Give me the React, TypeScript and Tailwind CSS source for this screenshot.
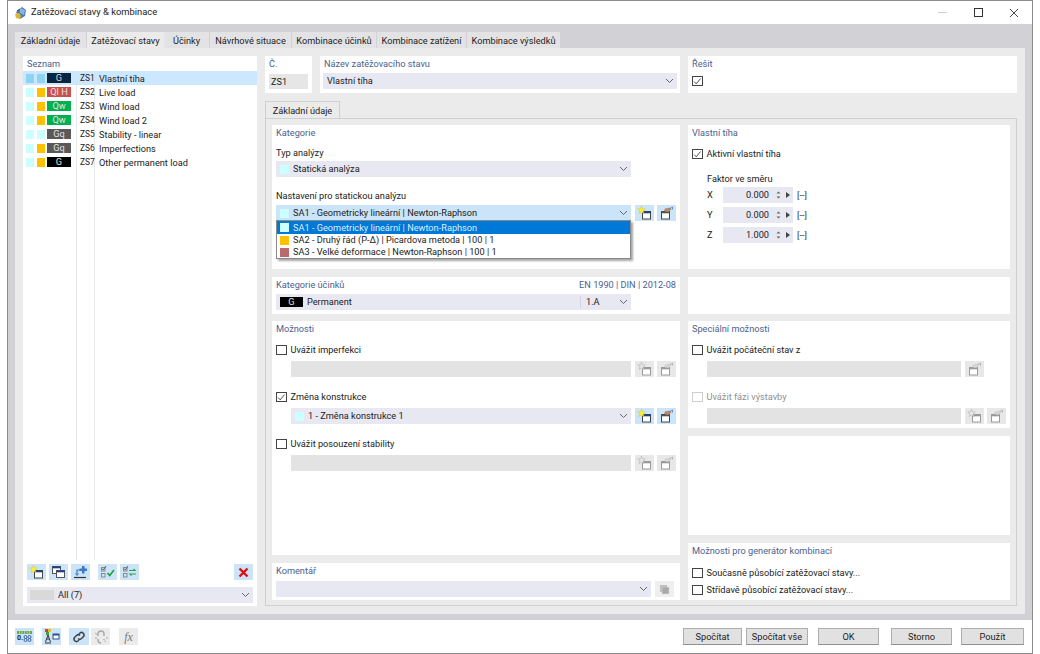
import { ReactNode } from "react";

const listRows = [
  { a: "bg-[#ccffff]", b: "bg-[#ffc000]", tag: "Ql H", tagColor: "bg-[#c85050]", code: "ZS2", name: "Live load" },
  { a: "bg-[#ccffff]", b: "bg-[#ffc000]", tag: "Qw", tagColor: "bg-[#00b050]", code: "ZS3", name: "Wind load" },
  { a: "bg-[#ccffff]", b: "bg-[#ffc000]", tag: "Qw", tagColor: "bg-[#00b050]", code: "ZS4", name: "Wind load 2" },
  { a: "bg-[#ccffff]", b: "bg-[#ccffff]", tag: "Gq", tagColor: "bg-[#595959]", code: "ZS5", name: "Stability - linear" },
  { a: "bg-[#ccffff]", b: "bg-[#ffc000]", tag: "Gq", tagColor: "bg-[#595959]", code: "ZS6", name: "Imperfections" },
  { a: "bg-[#ccffff]", b: "bg-[#ffc000]", tag: "G", tagColor: "bg-black", code: "ZS7", name: "Other permanent load" },
];

const tabs = [
  { label: "Základní údaje", w: "w-[72px]" },
  { label: "Zatěžovací stavy", w: "w-[77px]", active: true },
  { label: "Účinky", w: "w-[46px]" },
  { label: "Návrhové situace", w: "w-[82px]" },
  { label: "Kombinace účinků", w: "w-[85px]" },
  { label: "Kombinace zatížení", w: "w-[90px]" },
  { label: "Kombinace výsledků", w: "w-[94px]" },
];

function Chevron() {
  return (
    <svg width="9" height="6" viewBox="0 0 9 6" className="shrink-0">
      <path d="M1 1l3.5 3.5L8 1" fill="none" stroke="#666" strokeWidth="1" />
    </svg>
  );
}

function Panel({ className, children }: { className: string; children?: ReactNode }) {
  return <div className={`bg-white px-[4px] pt-[1px] ${className}`}>{children}</div>;
}

function Title({ children }: { children: ReactNode }) {
  return <div className="h-[14px] whitespace-nowrap leading-[14px] text-[#4a6190]">{children}</div>;
}

function Check({ checked, disabled, label }: { checked?: boolean; disabled?: boolean; label: string }) {
  return (
    <div className={`flex h-[14px] items-center gap-[4px] ${disabled ? "text-[#8f8f8f]" : ""}`}>
      <span className={`flex h-[10.5px] w-[10.5px] items-center justify-center border ${disabled ? "border-[#cfcfcf]" : "border-[#444]"}`}>
        {checked && (
          <svg width="9" height="9" viewBox="0 0 9 9">
            <path d="M1.2 4.6l2.2 2.4L8 1.4" fill="none" stroke="#444" strokeWidth="1" />
          </svg>
        )}
      </span>
      <span>{label}</span>
    </div>
  );
}

function Swatch({ className }: { className: string }) {
  return <span className={`h-[9px] w-[9px] shrink-0 ${className}`} />;
}

function Combo({ className, swatch, text }: { className: string; swatch?: string; text: string }) {
  return (
    <div className={`flex h-[16px] items-center pl-[4px] pr-[3px] ${className}`}>
      {swatch && <Swatch className={`${swatch} mr-[4px]`} />}
      <span className="flex-1">{text}</span>
      <Chevron />
    </div>
  );
}

function NewIcon({ off }: { off?: boolean }) {
  return (
    <svg width="15" height="14" viewBox="0 0 15 14">
      <rect x="5.500" y="5.500" width="8" height="7.500" fill="#fff" stroke={off ? "#9a9a9a" : "#444"} />
      <rect x="5.500" y="5.500" width="8" height="1.800" fill={off ? "#9a9a9a" : "#1f3f80"} />
      <path d="M4.500 0l1 2.800 2.800.2-2.200 1.800.8 2.800-2.400-1.600-2.400 1.600.8-2.800L.7 3l2.800-.2z" fill={off ? "#e6e6e6" : "#ffee33"} stroke={off ? "#aaa" : "#d8c820"} strokeWidth="0.5" />
    </svg>
  );
}

function EditIcon({ off }: { off?: boolean }) {
  return (
    <svg width="15" height="14" viewBox="0 0 15 14">
      <rect x="2.500" y="5.500" width="8" height="7.500" fill="#fff" stroke={off ? "#9a9a9a" : "#444"} />
      <rect x="2.500" y="5.500" width="8" height="1.800" fill={off ? "#9a9a9a" : "#555"} />
      <path d="M5 5l1-2.500 5-1 1.500 2-3.500 2.500z" fill={off ? "#d4d4d4" : "#b88a68"} />
      <path d="M10.500 3l3-2M13.500 1v2.500" fill="none" stroke={off ? "#b5b5b5" : "#5b8fd0"} strokeWidth="1" />
    </svg>
  );
}

function CopyIcon() {
  return (
    <svg width="15" height="14" viewBox="0 0 15 14">
      <rect x="1.500" y="1.500" width="8" height="7" fill="#fff" stroke="#555" />
      <rect x="1.500" y="1.500" width="8" height="1.800" fill="#1f3f80" />
      <rect x="5.500" y="5.500" width="8" height="7" fill="#fff" stroke="#555" />
      <rect x="5.500" y="5.500" width="8" height="1.800" fill="#1f3f80" />
    </svg>
  );
}

function ImportIcon() {
  return (
    <svg width="15" height="14" viewBox="0 0 15 14">
      <path d="M1 12.500h12" stroke="#333" strokeWidth="1.200" />
      <path d="M4 10V5h3" fill="none" stroke="#3b78c8" strokeWidth="1.200" />
      <path d="M2.500 8.500L4 10.500l1.500-2" fill="none" stroke="#3b78c8" strokeWidth="1" />
      <path d="M9 1h2.500v2.500H14V6h-2.500v2.500H9V6H6.500V3.500H9z" fill="#3b78c8" />
    </svg>
  );
}

function ListIcon({ swap }: { swap?: boolean }) {
  return (
    <svg width="15" height="14" viewBox="0 0 15 14">
      <rect x="1.500" y="2.500" width="3.500" height="3.500" fill="none" stroke="#8a8a8a" />
      <rect x="1.500" y="8.500" width="3.500" height="3.500" fill="none" stroke="#8a8a8a" />
      <path d="M2 3.500l1.300 1.500L6 1" fill="none" stroke="#555" strokeWidth="0.900" />
      {swap ? (
        <g fill="none" stroke="#2aa24a" strokeWidth="1.200">
          <path d="M7 5.500h6l-1.500-1.500" />
          <path d="M14 9H8l1.500 1.500" />
        </g>
      ) : (
        <path d="M7.500 8l2.200 2.500L14 5" fill="none" stroke="#1f9e3e" strokeWidth="1.600" />
      )}
    </svg>
  );
}

function IconBtn({ children, off, plain }: { children?: ReactNode; off?: boolean; plain?: boolean }) {
  return (
    <div className={`flex h-[16px] w-[19px] shrink-0 items-center justify-center ${plain ? "bg-[#efefef]" : off ? "bg-[#e8e8e8]" : "bg-[#cce4f7]"}`}>
      {children}
    </div>
  );
}

function FooterBtn({ label, className }: { label: string; className: string }) {
  return (
    <div className={`flex h-[17px] items-center justify-center border border-[#adadad] border-b-[#8f8f8f] bg-[#e1e1e1] ${className}`}>
      {label}
    </div>
  );
}

function Factor({ axis, value }: { axis: string; value: string }) {
  return (
    <div className="ml-[15px] mt-[4px] flex h-[16px] items-center first:mt-[1px]">
      <span className="w-[16px]">{axis}</span>
      <div className="flex h-[16px] w-[70px] items-center justify-end bg-[#e8e8f2] pr-[24px]">{value}</div>
      <svg width="7" height="10" viewBox="0 0 7 10" className="-ml-[18px]">
        <path d="M1.500 3.500L3.500 1.500l2 2zM1.500 6.500l2 2 2-2z" fill="#666" />
      </svg>
      <svg width="4" height="6" viewBox="0 0 4 6" className="ml-[4px]">
        <path d="M0 0l4 3-4 3z" fill="#444" />
      </svg>
      <span className="ml-[7px] text-[#333]">[--]</span>
    </div>
  );
}

export default function App() {
  return (
    <div className="flex h-[654px] w-[1040px] overflow-hidden bg-white pl-[7px] font-['Roboto',sans-serif] text-[9.2px] text-[#222]">
      <div className="flex h-[654px] w-[1026px] flex-col border-x border-y border-[#8c8c8c]">
        {/* Title bar */}
        <div className="flex h-[23px] shrink-0 items-center pl-[6px] pr-[13px]">
          <svg width="13" height="14" viewBox="0 0 13 14">
            <path d="M2 6l6-5 4 3-1 6-5 3z" fill="#4f7fb5" />
            <path d="M6 2l5 2-1 5-4-2z" fill="#8db4d9" />
            <path d="M1 8l4-1 2 3-1 3-4-1z" fill="#e0b52e" />
            <path d="M3 5l3-2" stroke="#26466e" strokeWidth="1" />
          </svg>
          <span className="ml-[4px] flex-1 text-[9.400px]">Zatěžovací stavy &amp; kombinace</span>
          <span className="mr-[27px] h-px w-[9px] bg-[#d0d0d0]" />
          <span className="mr-[26px] h-[9px] w-[9px] border border-[#333]" />
          <svg width="10" height="10" viewBox="0 0 10 10">
            <path d="M1 1l8 8M9 1l-8 8" stroke="#333" strokeWidth="0.9" />
          </svg>
        </div>

        {/* Tabs and content */}
        <div className="h-[596px] shrink-0 bg-[#d2d2d6] px-[7px] pt-[8px]">
          <div className="flex h-[16px]">
            {tabs.map((t) => (
              <div
                key={t.label}
                className={`flex h-[16px] items-center justify-center whitespace-nowrap pt-[2px] ${t.w} ${t.active ? "bg-[#ebebeb]" : "border-r border-[#d2d2d6] bg-[#e3e3e5]"}`}
              >
                {t.label}
              </div>
            ))}
          </div>
          <div className="flex h-[566px] gap-[8px] bg-[#ebebeb] pl-[8px] pt-[8px]">
            {/* Left list */}
            <div className="flex h-[550px] w-[234px] flex-col bg-white">
              <div className="h-[15px] pl-[4px] leading-[15px] text-[#4a6190]">Seznam</div>
              <div className="flex h-[489px] flex-col">
                <div className="flex h-[14px] items-center bg-[#cce8ff]">
                  <div className="flex w-[54px] items-center pl-[3px]">
                    <span className="h-[9px] w-[8px] bg-[#8fd3f4]" />
                    <span className="ml-[3px] h-[9px] w-[8px] bg-[#8fd3f4]" />
                    <span className="ml-[2px] flex h-[10px] w-[24px] items-center justify-center bg-[#0a2540] text-[#d8d8d8]">G</span>
                  </div>
                  <div className="w-[18px] whitespace-nowrap pl-[3px] pt-[1px] text-[8.400px]">ZS1</div>
                  <div className="pl-[4px] pt-[1px]">Vlastní tíha</div>
                </div>
                {listRows.map((r) => (
                  <div key={r.code} className="flex h-[14px] items-center">
                    <div className="flex h-[14px] w-[54px] items-center border-r border-[#e8e8e8] pl-[3px]">
                      <span className={`h-[9px] w-[8px] ${r.a}`} />
                      <span className={`ml-[3px] h-[9px] w-[8px] ${r.b}`} />
                      <span className={`ml-[2px] flex h-[10px] w-[24px] items-center justify-center text-[#e4e4e4] ${r.tagColor}`}>{r.tag}</span>
                    </div>
                    <div className="flex h-[14px] w-[18px] items-center whitespace-nowrap border-r border-[#e8e8e8] pl-[3px] pt-[1px] text-[8.400px]">{r.code}</div>
                    <div className="pl-[4px] pt-[1px]">{r.name}</div>
                  </div>
                ))}
                <div className="flex flex-1">
                  <div className="w-[54px] border-r border-[#e8e8e8]" />
                  <div className="w-[18px] border-r border-[#e8e8e8]" />
                </div>
              </div>
              <div className="mt-[4px] flex px-[4px]">
                <div className="mr-[3px]"><IconBtn><NewIcon /></IconBtn></div>
                <div className="mr-[3px]"><IconBtn><CopyIcon /></IconBtn></div>
                <div className="mr-[8px]"><IconBtn><ImportIcon /></IconBtn></div>
                <div className="mr-[3px]"><IconBtn><ListIcon /></IconBtn></div>
                <IconBtn><ListIcon swap /></IconBtn>
                <div className="ml-auto">
                  <IconBtn>
                    <svg width="11" height="11" viewBox="0 0 11 11">
                      <path d="M1.500 1.500l8 8M9.500 1.500l-8 8" stroke="#e01010" strokeWidth="2.400" />
                    </svg>
                  </IconBtn>
                </div>
              </div>
              <div className="mx-[4px] mt-[7px] flex h-[16px] items-center bg-[#e8e8f2] pl-[3px] pr-[3px]">
                <span className="h-[10px] w-[24px] bg-[#d9d9d9]" />
                <span className="ml-[4px] flex-1">All (7)</span>
                <Chevron />
              </div>
            </div>

            {/* Right part */}
            <div className="w-[752px]">
              <div className="flex h-[37px] gap-[8px]">
                <Panel className="w-[47px]">
                  <Title>Č.</Title>
                  <div className="mt-[3px] flex h-[15px] w-[39px] items-center bg-[#e6e6e6] pl-[2px]">ZS1</div>
                </Panel>
                <Panel className="w-[360px]">
                  <Title>Název zatěžovacího stavu</Title>
                  <div className="-ml-[1px] mt-[2px] w-[354px]">
                    <Combo className="bg-[#e8e8f2]" text="Vlastní tíha" />
                  </div>
                </Panel>
                <Panel className="w-[329px]">
                  <Title>Řešit</Title>
                  <div className="mt-[3px]"><Check checked label="" /></div>
                </Panel>
              </div>

              <div className="mt-[8px] flex h-[18px] w-[75px] items-center justify-center border-x border-t border-[#d0d0d4] bg-[#ebebeb] pt-[1px]">
                Základní údaje
              </div>
              <div className="-mt-px flex h-[488px] gap-[8px] border border-[#d0d0d4] pl-[6px] pt-[6px]">
                {/* Middle column */}
                <div className="w-[408px]">
                  <Panel className="h-[144px]">
                    <Title>Kategorie</Title>
                    <div className="mt-[6px] h-[14px] leading-[14px]">Typ analýzy</div>
                    <div className="mt-[1px] w-[355px]">
                      <Combo className="bg-[#e8e8f2]" swatch="bg-[#ccffff]" text="Statická analýza" />
                    </div>
                    <div className="mt-[12px] h-[14px] leading-[14px]">Nastavení pro statickou analýzu</div>
                    <div className="mt-[2px] flex gap-[4px]">
                      <div className="relative w-[355px]">
                        <Combo className="bg-[#cce4f7]" swatch="bg-[#ccffff]" text="SA1 - Geometricky lineární | Newton-Raphson" />
                        <div className="absolute left-0 top-[15px] z-10 h-[39px] w-[355px] border border-[#8a8a8a] bg-white shadow-[2px_2px_2px_rgba(0,0,0,0.35)]">
                          <div className="flex h-[13px] items-center bg-[#0078d7] pl-[3px] text-[#dceefb]">
                            <Swatch className="mr-[4px] bg-[#ccffff]" />
                            SA1 - Geometricky lineární | Newton-Raphson
                          </div>
                          <div className="flex h-[12px] items-center pl-[3px]">
                            <Swatch className="mr-[4px] bg-[#ffc000]" />
                            SA2 - Druhý řád (P-Δ) | Picardova metoda | 100 | 1
                          </div>
                          <div className="flex h-[12px] items-center pl-[3px]">
                            <Swatch className="mr-[4px] bg-[#b96b6b]" />
                            SA3 - Velké deformace | Newton-Raphson | 100 | 1
                          </div>
                        </div>
                      </div>
                      <div className="flex gap-[3px]">
                        <IconBtn><NewIcon /></IconBtn>
                        <IconBtn><EditIcon /></IconBtn>
                      </div>
                    </div>
                  </Panel>

                  <Panel className="mt-[8px] h-[37px]">
                    <div className="flex justify-between">
                      <Title>Kategorie účinků</Title>
                      <Title>EN 1990 | DIN | 2012-08</Title>
                    </div>
                    <div className="mt-[2px] flex h-[16px] w-[355px] items-center bg-[#e8e8f2] pl-[4px] pr-[3px]">
                      <span className="flex h-[10px] w-[23px] items-center justify-center bg-black text-[#e4e4e4]">G</span>
                      <span className="ml-[4px] w-[273px]">Permanent</span>
                      <span className="h-[12px] w-px bg-[#d4d4de]" />
                      <span className="ml-[5px] flex-1">1.A</span>
                      <Chevron />
                    </div>
                  </Panel>

                  <Panel className="mt-[7px] h-[234px]">
                    <Title>Možnosti</Title>
                    <div className="mt-[7px]"><Check label="Uvážit imperfekci" /></div>
                    <div className="ml-[15px] mt-[4px] flex gap-[4px]">
                      <div className="h-[16px] w-[340px] bg-[#e3e3e3]" />
                      <div className="flex gap-[3px]">
                        <IconBtn off><NewIcon off /></IconBtn>
                        <IconBtn off><EditIcon off /></IconBtn>
                      </div>
                    </div>
                    <div className="mt-[13px]"><Check checked label="Změna konstrukce" /></div>
                    <div className="ml-[15px] mt-[4px] flex gap-[4px]">
                      <Combo className="w-[340px] bg-[#e8e8f2]" swatch="bg-[#ccffff]" text="1 - Změna konstrukce 1" />
                      <div className="flex gap-[3px]">
                        <IconBtn><NewIcon /></IconBtn>
                        <IconBtn><EditIcon /></IconBtn>
                      </div>
                    </div>
                    <div className="mt-[13px]"><Check label="Uvážit posouzení stability" /></div>
                    <div className="ml-[15px] mt-[4px] flex gap-[4px]">
                      <div className="h-[16px] w-[340px] bg-[#e3e3e3]" />
                      <div className="flex gap-[3px]">
                        <IconBtn off><NewIcon off /></IconBtn>
                        <IconBtn off><EditIcon off /></IconBtn>
                      </div>
                    </div>
                  </Panel>

                  <Panel className="mt-[8px] h-[37px]">
                    <Title>Komentář</Title>
                    <div className="mt-[3px] flex gap-[4px]">
                      <Combo className="w-[375px] bg-[#e8e8f2]" text="" />
                      <IconBtn plain>
                        <svg width="11" height="11" viewBox="0 0 11 11">
                          <rect x="1" y="1" width="7" height="7" fill="#bdbdbd" />
                          <rect x="3" y="3" width="7" height="7" fill="#a9a9a9" stroke="#dcdcdc" strokeWidth="0.5" />
                        </svg>
                      </IconBtn>
                    </div>
                  </Panel>
                </div>

                {/* Right column */}
                <div className="w-[322px]">
                  <Panel className="h-[144px]">
                    <Title>Vlastní tíha</Title>
                    <div className="mt-[7px]"><Check checked label="Aktivní vlastní tíha" /></div>
                    <div className="ml-[15px] mt-[11px] h-[14px] leading-[14px]">Faktor ve směru</div>
                    <div>
                      <Factor axis="X" value="0.000" />
                      <Factor axis="Y" value="0.000" />
                      <Factor axis="Z" value="1.000" />
                    </div>
                  </Panel>
                  <Panel className="mt-[8px] h-[37px]" />
                  <Panel className="mt-[7px] h-[107px]">
                    <Title>Speciální možnosti</Title>
                    <div className="mt-[7px]"><Check label="Uvážit počáteční stav z" /></div>
                    <div className="ml-[15px] mt-[4px] flex gap-[4px]">
                      <div className="h-[16px] w-[254px] bg-[#e3e3e3]" />
                      <IconBtn off><EditIcon off /></IconBtn>
                    </div>
                    <div className="mt-[13px]"><Check disabled label="Uvážit fázi výstavby" /></div>
                    <div className="ml-[15px] mt-[4px] flex gap-[4px]">
                      <div className="h-[16px] w-[254px] bg-[#e3e3e3]" />
                      <div className="flex gap-[3px]">
                        <IconBtn off><NewIcon off /></IconBtn>
                        <IconBtn off><EditIcon off /></IconBtn>
                      </div>
                    </div>
                  </Panel>
                  <Panel className="mt-[8px] h-[99px]" />
                  <Panel className="mt-[8px] h-[57px]">
                    <Title>Možnosti pro generátor kombinací</Title>
                    <div className="mt-[8px]"><Check label="Současně působící zatěžovací stavy..." /></div>
                    <div className="mt-[3px]"><Check label="Střídavě působící zatěžovací stavy..." /></div>
                  </Panel>
                </div>
              </div>
            </div>
          </div>
        </div>

        {/* Footer */}
        <div className="flex flex-1 items-center pl-[7px] pr-[8px]">
          <div className="mr-[8px] flex h-[17px] w-[19px] flex-col items-center justify-center bg-[#cce4f7]">
            <svg width="15" height="3" viewBox="0 0 15 3">
              <path d="M0 1.500h15" stroke="#6fa84e" strokeWidth="3" strokeDasharray="2 0.600" />
            </svg>
            <div className="flex items-center">
              <span className="text-[7px] font-bold leading-[9px] text-[#222]">0.</span>
              <svg width="9" height="7" viewBox="0 0 9 7">
                <circle cx="2.500" cy="2" r="1.500" fill="none" stroke="#3d64a8" />
                <circle cx="6.500" cy="2" r="1.500" fill="none" stroke="#3d64a8" />
                <circle cx="2.500" cy="5" r="1.500" fill="none" stroke="#3d64a8" />
                <circle cx="6.500" cy="5" r="1.500" fill="none" stroke="#3d64a8" />
              </svg>
            </div>
          </div>
          <div className="mr-[8px] flex h-[17px] w-[19px] items-center justify-center bg-[#cce4f7]">
            <svg width="16" height="15" viewBox="0 0 16 15">
              <rect x="1" y="0" width="3" height="3" fill="#d04040" />
              <rect x="4" y="0" width="3" height="3" fill="#e0c020" />
              <rect x="2" y="3" width="3" height="3" fill="#40a040" />
              <path d="M4 6L1.500 13M4 6l2.500 7M2.500 10h3M1 14h6" fill="none" stroke="#333" strokeWidth="1" />
              <rect x="9" y="5" width="6" height="5" fill="#fff" stroke="#2a4f8a" />
              <rect x="9" y="5" width="6" height="1.500" fill="#2a4f8a" />
            </svg>
          </div>
          <div className="mr-[2px] flex h-[17px] w-[20px] items-center justify-center bg-[#cce4f7]">
            <svg width="14" height="14" viewBox="0 0 14 14">
              <path d="M6 8.500a2.500 2.500 0 0 0 3.500 0l2-2a2.500 2.500 0 0 0-3.500-3.500l-1 1" fill="none" stroke="#444" strokeWidth="1.500" />
              <path d="M8 5.500a2.500 2.500 0 0 0-3.500 0l-2 2a2.500 2.500 0 0 0 3.500 3.500l1-1" fill="none" stroke="#444" strokeWidth="1.500" />
            </svg>
          </div>
          <div className="mr-[9px] flex h-[17px] w-[19px] items-center justify-center bg-[#ebebeb]">
            <svg width="14" height="14" viewBox="0 0 14 14">
              <path d="M4 6V4a3 3 0 0 1 6 0v2M4 9v1a3 3 0 0 0 3 3M10 9v1" fill="none" stroke="#a8a8a8" strokeWidth="1.400" />
              <path d="M1 3l2 1.500M1 8h2M12 8h2M12 12l-1.500-1.500" fill="none" stroke="#a8a8a8" strokeWidth="1" />
            </svg>
          </div>
          <div className="flex h-[17px] w-[19px] items-center justify-center bg-[#ebebeb] font-['Liberation_Serif',serif] text-[12px] italic text-[#777]">
            fx
          </div>
          <div className="ml-auto flex">
            <FooterBtn label="Spočítat" className="w-[59px]" />
            <FooterBtn label="Spočítat vše" className="ml-[4px] w-[62px]" />
            <FooterBtn label="OK" className="ml-[10px] w-[61px]" />
            <FooterBtn label="Storno" className="ml-[12px] w-[61px]" />
            <FooterBtn label="Použít" className="ml-[9px] w-[63px]" />
          </div>
        </div>
      </div>
    </div>
  );
}
